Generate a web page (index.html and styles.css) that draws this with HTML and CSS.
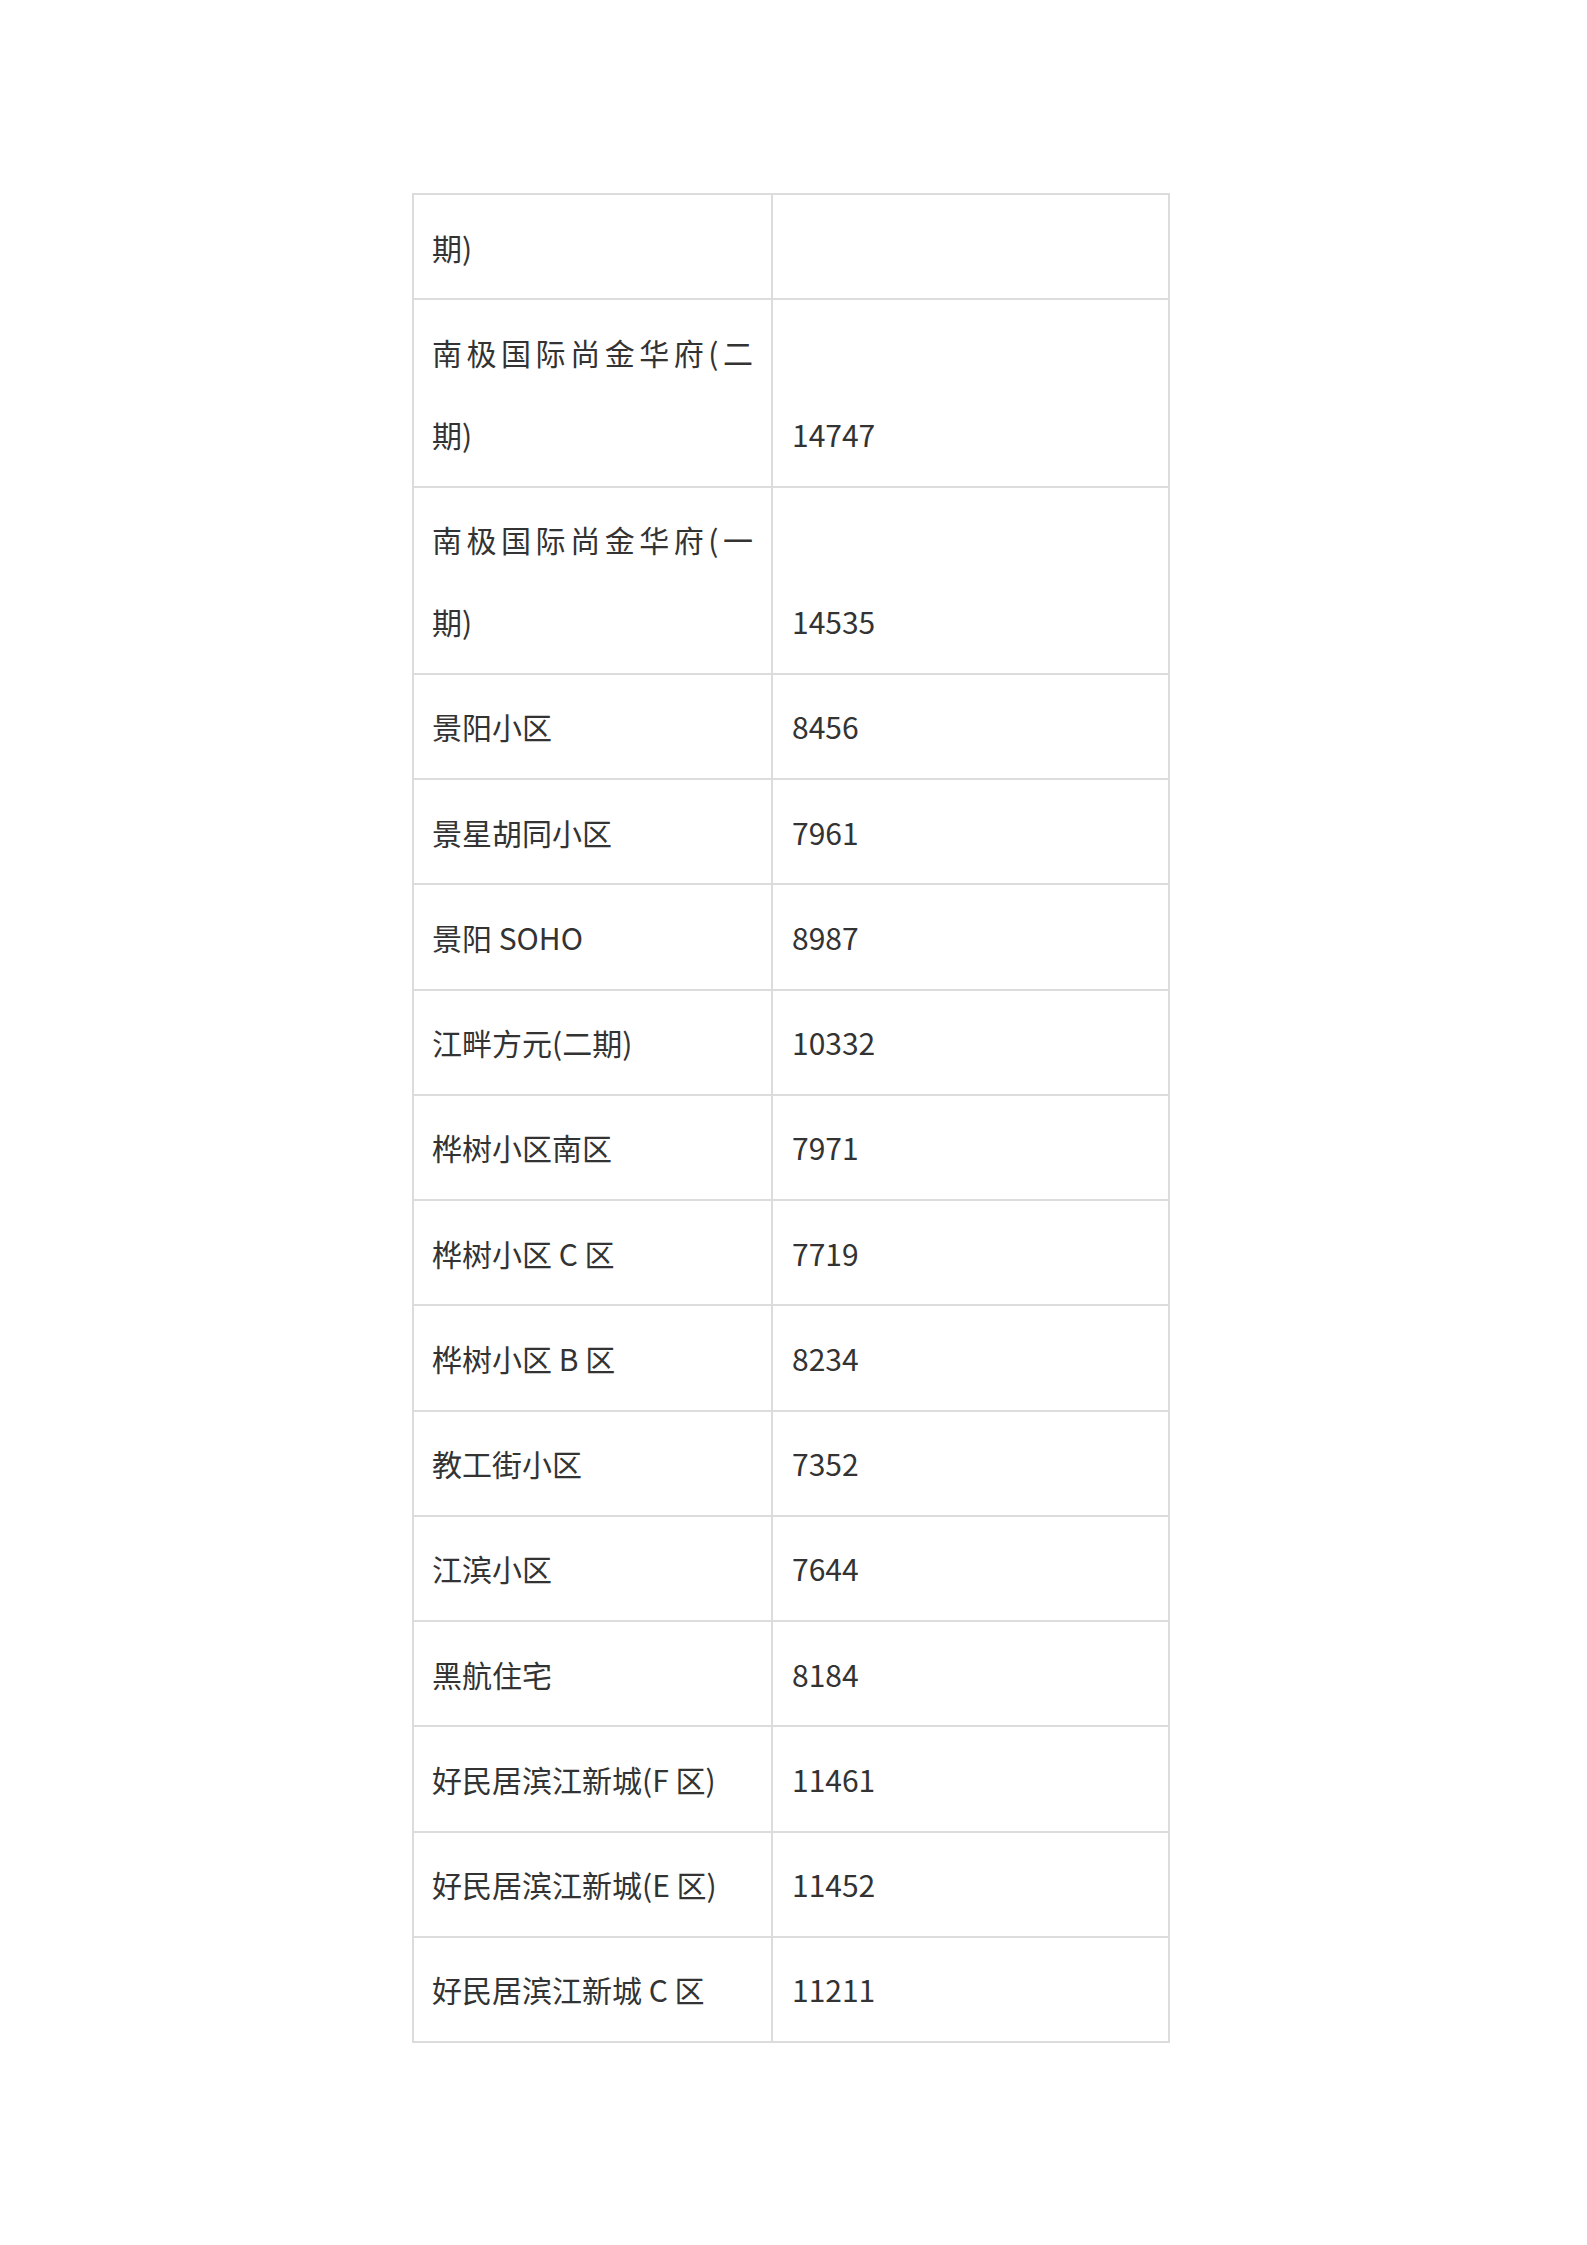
FILE: index.html
```html
<!DOCTYPE html>
<html lang="zh-CN">
<head>
<meta charset="utf-8">
<title>小区价格表</title>
<link rel="stylesheet" href="styles.css">
</head>
<body>
<table class="price-table">
  <colgroup>
    <col class="col-name">
    <col class="col-price">
  </colgroup>
  <tbody>
    <tr><td class="name">期)</td><td class="price"></td></tr>
    <tr><td class="name"><div class="just">南极国际尚金华府(二</div><div>期)</div></td><td class="price">14747</td></tr>
    <tr><td class="name"><div class="just">南极国际尚金华府(一</div><div>期)</div></td><td class="price">14535</td></tr>
    <tr><td class="name">景阳小区</td><td class="price">8456</td></tr>
    <tr><td class="name">景星胡同小区</td><td class="price">7961</td></tr>
    <tr><td class="name">景阳 SOHO</td><td class="price">8987</td></tr>
    <tr><td class="name">江畔方元(二期)</td><td class="price">10332</td></tr>
    <tr><td class="name">桦树小区南区</td><td class="price">7971</td></tr>
    <tr><td class="name">桦树小区 C 区</td><td class="price">7719</td></tr>
    <tr><td class="name">桦树小区 B 区</td><td class="price">8234</td></tr>
    <tr><td class="name">教工街小区</td><td class="price">7352</td></tr>
    <tr><td class="name">江滨小区</td><td class="price">7644</td></tr>
    <tr><td class="name">黑航住宅</td><td class="price">8184</td></tr>
    <tr><td class="name">好民居滨江新城(F 区)</td><td class="price">11461</td></tr>
    <tr><td class="name">好民居滨江新城(E 区)</td><td class="price">11452</td></tr>
    <tr><td class="name">好民居滨江新城 C 区</td><td class="price">11211</td></tr>
  </tbody>
</table>
</body>
</html>
```
FILE: styles.css
```css
html, body {
  margin: 0;
  padding: 0;
  background: #ffffff;
}

body {
  font-family: "Noto Sans CJK SC", "Noto Sans", sans-serif;
  color: #333333;
  padding: 193px 0 200px 412px;
}

.price-table {
  border-collapse: collapse;
  table-layout: fixed;
  width: 756px;
  border: 2px solid #dcdcdc;
}

.col-name {
  width: 359px;
}

.col-price {
  width: 397px;
}

.price-table td {
  border: 2px solid #dcdcdc;
  padding: 10.5px 18px 10.75px 18px;
  font-size: 30px;
  line-height: 82px;
  vertical-align: bottom;
  text-align: left;
  white-space: nowrap;
}

.price-table td.price {
  padding-left: 19px;
}

.just {
  text-align: justify;
  text-align-last: justify;
}
```
